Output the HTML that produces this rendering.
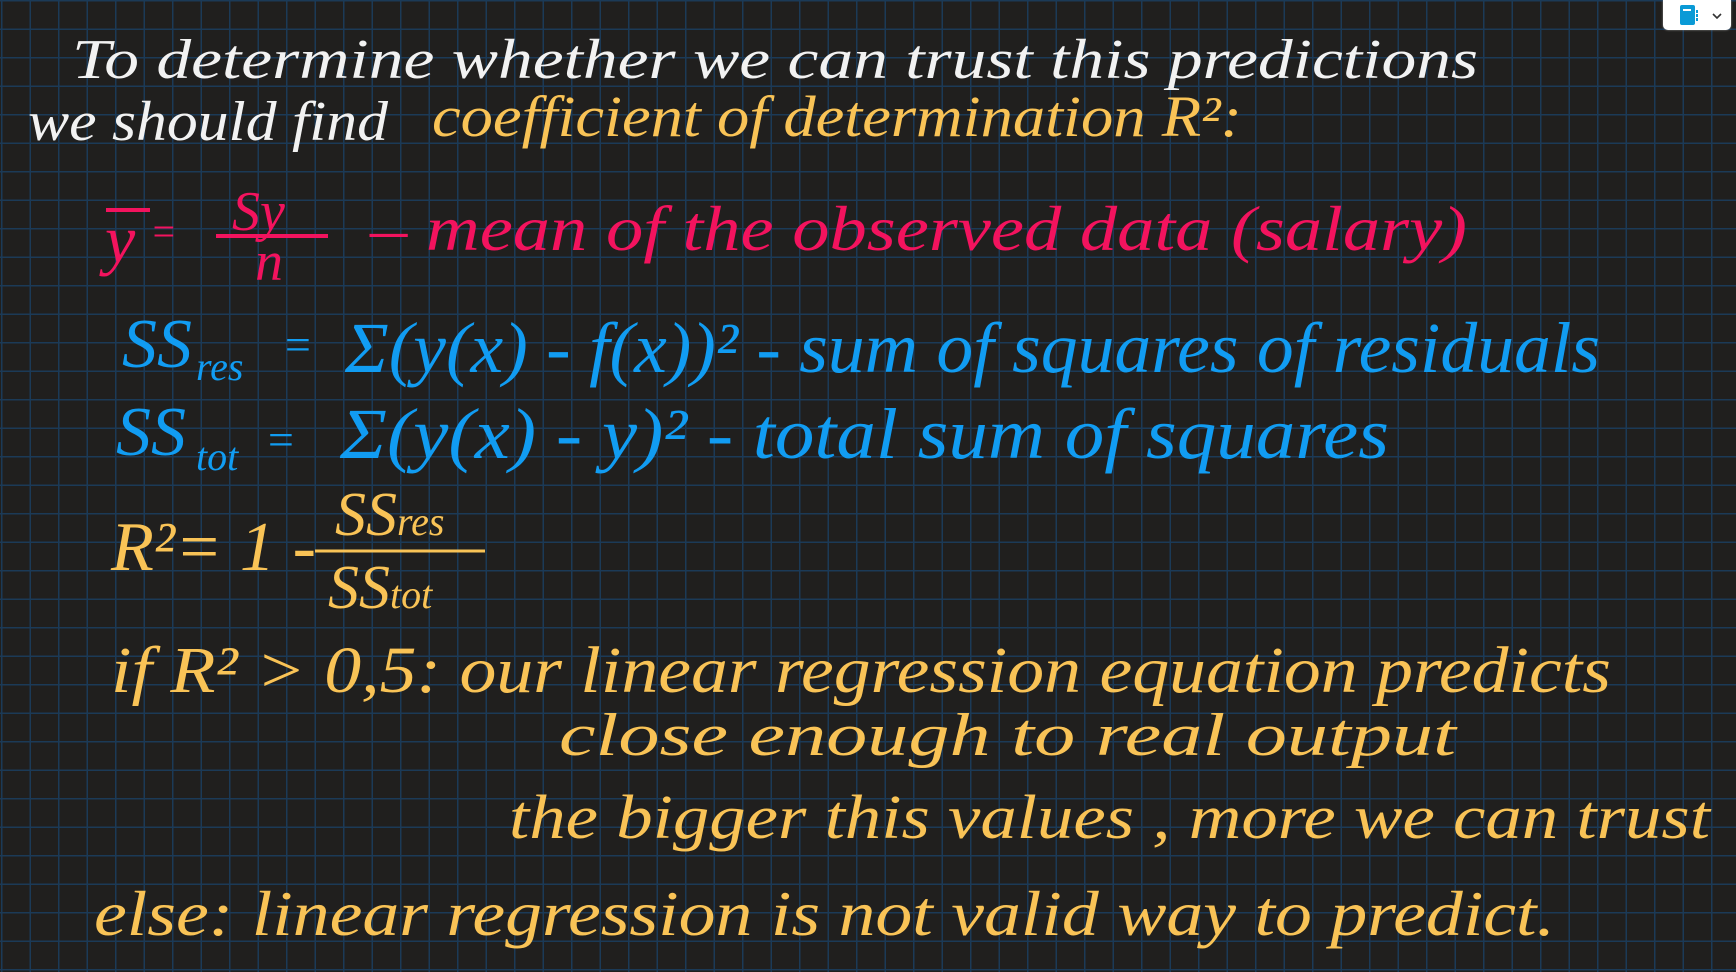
<!DOCTYPE html>
<html><head><meta charset="utf-8"><style>
html,body{margin:0;padding:0}
body{width:1736px;height:972px;overflow:hidden;background-color:#201f1e;
background-image:linear-gradient(to right,#1b3a57 1.5px,transparent 1.5px),linear-gradient(to bottom,#1b3a57 1.5px,transparent 1.5px);
background-size:28.5px 28.5px;background-position:1px 0px;position:relative}
svg{position:absolute;left:0;top:0}
text{font-family:"Liberation Serif",serif;font-style:italic}
.w{fill:#f2f2f2}.y{fill:#f9c356}.p{fill:#f3135e}.b{fill:#119cf2}
</style></head><body>
<svg width="1736" height="972" viewBox="0 0 1736 972">
<text class="w" x="72" y="78" font-size="56" textLength="1406" lengthAdjust="spacingAndGlyphs">To determine  whether  we can  trust  this  predictions</text>
<text class="w" x="28" y="140" font-size="56" textLength="360" lengthAdjust="spacingAndGlyphs">we should find</text>
<text class="y" x="432" y="136" font-size="58" textLength="810" lengthAdjust="spacingAndGlyphs">coefficient of determination R²:</text>

<text class="p" x="105" y="262" font-size="68">y</text>
<line x1="106" y1="210" x2="150" y2="210" stroke="#f3135e" stroke-width="4"/>
<text class="p" x="150" y="245" font-size="40">=</text>
<text class="p" x="232" y="230" font-size="56">Sy</text>
<line x1="216" y1="236" x2="328" y2="236" stroke="#f3135e" stroke-width="4"/>
<text class="p" x="255" y="280" font-size="56">n</text>
<text class="p" x="370" y="250" font-size="64" textLength="1097" lengthAdjust="spacingAndGlyphs">–  mean  of  the  observed  data (salary)</text>

<text class="b" x="122" y="367" font-size="70">SS</text>
<text class="b" x="196" y="380" font-size="40">res</text>
<text class="b" x="282" y="360" font-size="46">=</text>
<text class="b" x="345" y="372" font-size="72" textLength="1255" lengthAdjust="spacingAndGlyphs">Σ(y(x) - f(x))²  - sum of squares of residuals</text>

<text class="b" x="116" y="455" font-size="70">SS</text>
<text class="b" x="196" y="470" font-size="40">tot</text>
<text class="b" x="265" y="455" font-size="46">=</text>
<text class="b" x="340" y="458" font-size="72" textLength="1049" lengthAdjust="spacingAndGlyphs">Σ(y(x) - y)²  - total  sum  of  squares</text>

<text class="y" x="111" y="570" font-size="70" textLength="205" lengthAdjust="spacingAndGlyphs">R²= 1 -</text>
<text class="y" x="335" y="535" font-size="62">SS<tspan font-size="40">res</tspan></text>
<line x1="315" y1="551" x2="485" y2="551" stroke="#f9c356" stroke-width="3"/>
<text class="y" x="328" y="608" font-size="62">SS<tspan font-size="40">tot</tspan></text>

<text class="y" x="111" y="692" font-size="66" textLength="1500" lengthAdjust="spacingAndGlyphs">if  R² &gt; 0,5: our linear regression  equation predicts</text>
<text class="y" x="559" y="755" font-size="60" textLength="897" lengthAdjust="spacingAndGlyphs">close   enough  to  real  output</text>
<text class="y" x="509" y="838" font-size="62" textLength="1201" lengthAdjust="spacingAndGlyphs">the bigger this values , more  we  can trust</text>
<text class="y" x="94" y="935" font-size="64" textLength="1461" lengthAdjust="spacingAndGlyphs">else: linear  regression  is  not valid way to predict.</text>
</svg>
<div style="position:absolute;left:1663px;top:0;width:68px;height:30px;background:#fff;border-radius:0 0 5px 5px;box-shadow:0 0 2px #888">
<div style="position:absolute;left:17px;top:5px;width:15px;height:20px;background:#0a9ad6;border-radius:2px"></div>
<div style="position:absolute;left:20px;top:9px;width:8px;height:2px;background:#fff"></div>
<div style="position:absolute;left:33px;top:10px;width:2px;height:3px;background:#0a9ad6"></div>
<div style="position:absolute;left:33px;top:14px;width:2px;height:3px;background:#0a9ad6"></div>
<div style="position:absolute;left:33px;top:18px;width:2px;height:3px;background:#0a9ad6"></div>
<svg width="10" height="6" style="left:49px;top:13px"><path d="M1 1L5 5L9 1" stroke="#333" stroke-width="1.6" fill="none"/></svg>
</div>
</body></html>
